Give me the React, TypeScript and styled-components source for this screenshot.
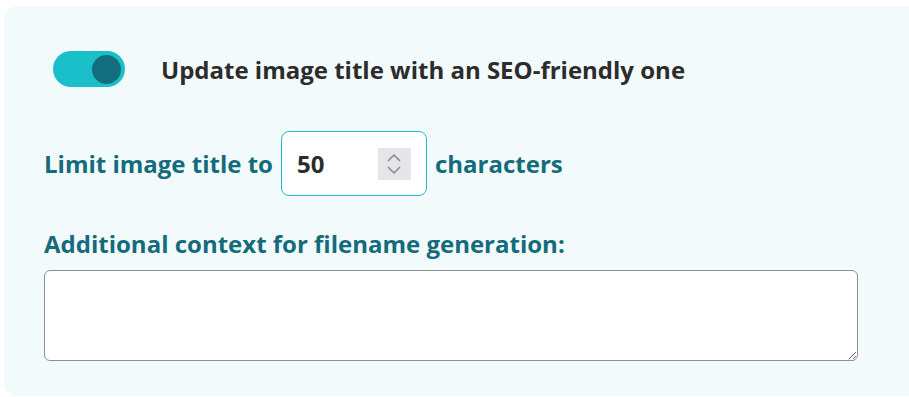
import styled, { createGlobalStyle } from 'styled-components';

const GlobalStyle = createGlobalStyle`
    html, body {
        margin: 0;
        padding: 0;
        background: #ffffff;
    }
    body {
        font-family: "Open Sans", "Noto Sans", sans-serif;
    }
`;

const Page = styled.div`
    padding: 6px 0 1px 4px;
`;

const Panel = styled.div`
    background: #f2fafc;
    border-radius: 14px 0 0 14px;
    padding: 45px 0 35px 40px;
    height: 390px;
    box-sizing: border-box;
`;

const ToggleRow = styled.div`
    display: flex;
    align-items: center;
    gap: 36px;
    padding-left: 9px;
`;

const Track = styled.div<{ on: boolean }>`
    width: 72px;
    height: 36px;
    border-radius: 18px;
    background: ${props => props.on ? "#1bbfca" : "#c3c4c7"};
    display: flex;
    align-items: center;
    justify-content: ${props => props.on ? "flex-end" : "flex-start"};
    padding: 0 4px;
    box-sizing: border-box;
    cursor: pointer;
`;

const Knob = styled.div`
    width: 29px;
    height: 29px;
    border-radius: 50%;
    background: #126e7e;
`;

const ToggleLabel = styled.span`
    font-size: 24px;
    font-weight: 700;
    color: #2c2c2c;
`;

const LimitRow = styled.div`
    display: flex;
    align-items: center;
    gap: 8px;
    margin-top: 44px;
`;

const Label = styled.span`
    font-size: 24px;
    font-weight: 700;
    color: #136b7b;
`;

const NumberBox = styled.div`
    width: 146px;
    height: 65px;
    box-sizing: border-box;
    border: 1px solid #1bbfca;
    border-radius: 8px;
    background: #ffffff;
    display: flex;
    align-items: center;
    padding: 0 15px 0 15px;
`;

const NumberInput = styled.input`
    border: none;
    outline: none;
    background: transparent;
    width: 70px;
    font-family: "Open Sans", "Noto Sans", sans-serif;
    font-size: 24px;
    font-weight: 700;
    color: #2c2c2c;
    padding: 0;
`;

const Spinner = styled.div`
    margin-left: auto;
    width: 33px;
    height: 32px;
    background: #e6e6ea;
    display: flex;
    align-items: center;
    justify-content: center;
`;

const ContextLabel = styled(Label)`
    display: block;
    margin-top: 31px;
`;

const ContextArea = styled.textarea`
    display: block;
    margin-top: 10px;
    width: 814px;
    height: 91px;
    box-sizing: border-box;
    border: 1px solid #8c8f94;
    border-radius: 6px;
    background: #ffffff;
    font-family: "Open Sans", "Noto Sans", sans-serif;
    font-size: 16px;
    padding: 8px 12px;
    resize: vertical;
    outline: none;
`;

const App = () => {
    return (
        <>
            <GlobalStyle />
            <Page>
                <Panel>
                    <ToggleRow>
                        <Track on={true}>
                            <Knob />
                        </Track>
                        <ToggleLabel>Update image title with an SEO-friendly one</ToggleLabel>
                    </ToggleRow>
                    <LimitRow>
                        <Label>Limit image title to</Label>
                        <NumberBox>
                            <NumberInput type="text" defaultValue="50" />
                            <Spinner>
                                <svg width="18" height="28" viewBox="0 0 18 28" fill="none" stroke="#8c8c90" strokeWidth="1.7" strokeLinecap="round" strokeLinejoin="round">
                                    <path d="M3.5 10.5 L9 5 L14.5 10.5" />
                                    <path d="M3.5 17.5 L9 23 L14.5 17.5" />
                                </svg>
                            </Spinner>
                        </NumberBox>
                        <Label>characters</Label>
                    </LimitRow>
                    <ContextLabel>Additional context for filename generation:</ContextLabel>
                    <ContextArea />
                </Panel>
            </Page>
        </>
    );
}

export default App;
